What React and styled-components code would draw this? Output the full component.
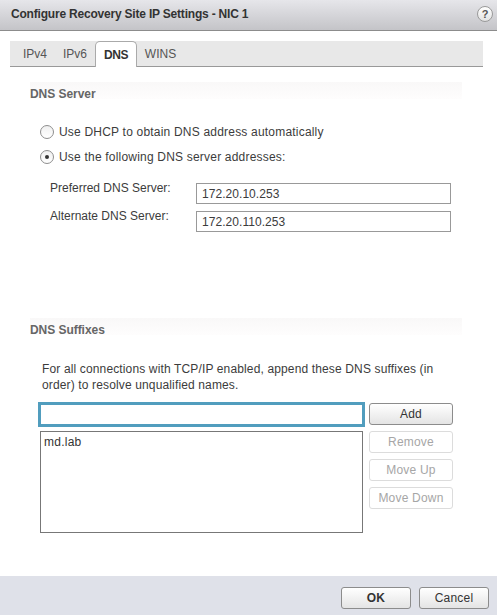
import React from "react";
import styled, { createGlobalStyle } from "styled-components";

const GlobalStyle = createGlobalStyle`
  html, body {
    margin: 0;
    padding: 0;
    background: #fff;
  }
  body {
    font-family: "Liberation Sans", Arial, sans-serif;
    font-size: 12px;
    color: #333;
  }
`;

const Dialog = styled.div`
  width: 497px;
  height: 615px;
  display: flex;
  flex-direction: column;
  overflow: hidden;
`;

const TitleBar = styled.header`
  height: 31px;
  flex: none;
  box-sizing: border-box;
  display: flex;
  align-items: center;
  justify-content: space-between;
  padding: 0 4px 2px 11px;
  background: linear-gradient(#e6e6ea, #c4c4c8);
  border-bottom: 1px solid #8c8c8c;
`;

const Title = styled.h1`
  margin: 0;
  font-size: 12px;
  font-weight: bold;
  color: #333;
  letter-spacing: -0.2px;
`;

const HelpButton = styled.div`
  width: 14px;
  height: 14px;
  border-radius: 50%;
  border: 1px solid #9a9a9a;
  background: linear-gradient(#fff, #e2e2e2);
  color: #555;
  font-size: 11px;
  font-weight: bold;
  line-height: 14px;
  text-align: center;
`;

const Body = styled.main`
  flex: 1;
  padding-top: 10px;
`;

const TabStrip = styled.nav`
  margin: 0 14px 0 10px;
  height: 26px;
  box-sizing: border-box;
  display: flex;
  align-items: flex-end;
  padding-left: 5px;
  background: #e8e8e8;
  border-bottom: 1px solid #999;
`;

const Tab = styled.div`
  width: ${(p) => p.$width}px;
  height: 24px;
  box-sizing: border-box;
  text-align: center;
  line-height: 24px;
  color: #555;
  ${(p) =>
    p.$active &&
    `
    margin-bottom: -1px;
    height: 26px;
    background: #fff;
    border: 1px solid #aaa;
    border-bottom: none;
    border-radius: 5px 5px 0 0;
    color: #333;
    font-weight: bold;
    letter-spacing: -0.4px;
    line-height: 26px;
  `}
`;

const SectionHeader = styled.h2`
  margin: ${(p) => p.$top}px 35px 0 30px;
  height: 17px;
  padding-bottom: 3px;
  font-size: 12px;
  font-weight: bold;
  color: #666;
  line-height: 24px;
  letter-spacing: -0.05px;
  background: linear-gradient(#f9f8f8, #fefdfd) no-repeat top / 100% 17px;
`;

const RadioGroup = styled.div`
  margin: 23px 0 0 40px;
  display: flex;
  flex-direction: column;
  gap: 11px;
`;

const RadioRow = styled.label`
  display: flex;
  align-items: center;
  gap: 5px;
  height: 14px;
  letter-spacing: 0.2px;
  color: #3c3c3c;
`;

const RadioMark = styled.span`
  width: 14px;
  height: 14px;
  box-sizing: border-box;
  flex: none;
  border-radius: 50%;
  border: 1px solid #8e8e8e;
  background: linear-gradient(#f0f0f0, #fff);
  display: flex;
  align-items: center;
  justify-content: center;
  &::after {
    content: "";
    display: ${(p) => (p.$checked ? "block" : "none")};
    width: 4px;
    height: 4px;
    border-radius: 50%;
    background: #333;
  }
`;

const FieldList = styled.div`
  margin: 19px 46px 0 50px;
  display: flex;
  flex-direction: column;
  gap: 7px;
`;

const FieldRow = styled.div`
  display: flex;
  justify-content: space-between;
  height: 21px;
`;

const FieldLabel = styled.label`
  line-height: 11px;
  color: #3c3c3c;
`;

const TextBox = styled.div`
  width: 255px;
  box-sizing: border-box;
  border: 1px solid #999;
  padding-left: 5px;
  line-height: 21px;
  letter-spacing: 0.05px;
  color: #3c3c3c;
`;

const Hint = styled.p`
  margin: 23px 60px 0 42px;
  line-height: 16px;
  letter-spacing: 0.14px;
  color: #3c3c3c;
`;

const SuffixArea = styled.div`
  margin: 9px 0 0 38px;
  display: grid;
  grid-template-columns: 327px 84px;
  column-gap: 4px;
`;

const SuffixColumn = styled.div`
  display: flex;
  flex-direction: column;
  gap: 4px;
`;

const FocusedInput = styled.div`
  height: 25px;
  box-sizing: border-box;
  border: 3px solid #519dbe;
`;

const SuffixList = styled.div`
  margin-left: 2px;
  width: 323px;
  height: 102px;
  box-sizing: border-box;
  border: 1px solid #777;
  padding: 3px 3px;
  line-height: 15px;
  letter-spacing: 0.25px;
`;

const ButtonColumn = styled.div`
  padding-top: 1px;
  display: flex;
  flex-direction: column;
  gap: 6px;
`;

const Button = styled.button`
  height: 22px;
  width: ${(p) => p.$width || "84px"};
  box-sizing: border-box;
  padding: 0;
  font-family: inherit;
  font-size: 12px;
  letter-spacing: 0.2px;
  border-radius: 3px;
  border: 1px solid ${(p) => (p.disabled ? "#dcdcdc" : "#8c8c8c")};
  color: ${(p) => (p.disabled ? "#a6a6a6" : "#333")};
  font-weight: ${(p) => (p.$strong ? "bold" : "normal")};
  background: ${(p) => (p.disabled ? "#fff" : "linear-gradient(#fff, #e4e4e4)")};
`;

const Footer = styled.footer`
  height: 39px;
  flex: none;
  box-sizing: border-box;
  background: #dfe1e9;
  display: flex;
  justify-content: flex-end;
  gap: 8px;
  padding: 11px 8px 0 0;
`;

const App = () => (
  <Dialog>
    <GlobalStyle />
    <TitleBar>
      <Title>Configure Recovery Site IP Settings - NIC 1</Title>
      <HelpButton>?</HelpButton>
    </TitleBar>
    <Body>
      <TabStrip>
        <Tab $width={40}>IPv4</Tab>
        <Tab $width={40}>IPv6</Tab>
        <Tab $width={42} $active>
          DNS
        </Tab>
        <Tab $width={47}>WINS</Tab>
      </TabStrip>

      <SectionHeader $top={15}>DNS Server</SectionHeader>
      <RadioGroup>
        <RadioRow>
          <RadioMark />
          Use DHCP to obtain DNS address automatically
        </RadioRow>
        <RadioRow>
          <RadioMark $checked />
          Use the following DNS server addresses:
        </RadioRow>
      </RadioGroup>
      <FieldList>
        <FieldRow>
          <FieldLabel>Preferred DNS Server:</FieldLabel>
          <TextBox>172.20.10.253</TextBox>
        </FieldRow>
        <FieldRow>
          <FieldLabel>Alternate DNS Server:</FieldLabel>
          <TextBox>172.20.110.253</TextBox>
        </FieldRow>
      </FieldList>

      <SectionHeader $top={86}>DNS Suffixes</SectionHeader>
      <Hint>
        For all connections with TCP/IP enabled, append these DNS suffixes (in
        order) to resolve unqualified names.
      </Hint>
      <SuffixArea>
        <SuffixColumn>
          <FocusedInput />
          <SuffixList>md.lab</SuffixList>
        </SuffixColumn>
        <ButtonColumn>
          <Button>Add</Button>
          <Button disabled>Remove</Button>
          <Button disabled>Move Up</Button>
          <Button disabled>Move Down</Button>
        </ButtonColumn>
      </SuffixArea>
    </Body>
    <Footer>
      <Button $width="70px" $strong>
        OK
      </Button>
      <Button $width="70px">Cancel</Button>
    </Footer>
  </Dialog>
);

export default App;
